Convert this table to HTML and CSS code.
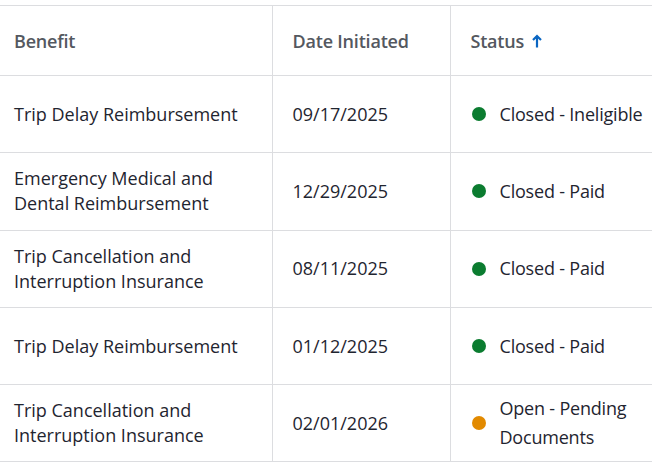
FILE: index.html
```html
<!DOCTYPE html>
<html lang="en">
<head>
<meta charset="utf-8">
<title>Claims</title>
<link rel="stylesheet" href="styles.css">
</head>
<body>
<div class="wrap">
<table class="claims">
  <thead>
    <tr>
      <th class="c1">Benefit</th>
      <th class="c2">Date Initiated</th>
      <th class="c3"><span class="sort">Status <svg class="arrow" width="10" height="14" viewBox="0 0 10 14"><path d="M5 13.5V2.5M1 6L5 2L9 6" fill="none" stroke="currentColor" stroke-width="2.2"/></svg></span></th>
    </tr>
  </thead>
  <tbody>
    <tr>
      <td class="c1">Trip Delay Reimbursement</td>
      <td class="c2">09/17/2025</td>
      <td class="c3"><div class="status"><span class="dot green"></span><span class="label">Closed - Ineligible</span></div></td>
    </tr>
    <tr>
      <td class="c1">Emergency Medical and<br>Dental Reimbursement</td>
      <td class="c2">12/29/2025</td>
      <td class="c3"><div class="status"><span class="dot green"></span><span class="label">Closed - Paid</span></div></td>
    </tr>
    <tr>
      <td class="c1">Trip Cancellation and<br>Interruption Insurance</td>
      <td class="c2">08/11/2025</td>
      <td class="c3"><div class="status"><span class="dot green"></span><span class="label">Closed - Paid</span></div></td>
    </tr>
    <tr>
      <td class="c1">Trip Delay Reimbursement</td>
      <td class="c2">01/12/2025</td>
      <td class="c3"><div class="status"><span class="dot green"></span><span class="label">Closed - Paid</span></div></td>
    </tr>
    <tr>
      <td class="c1">Trip Cancellation and<br>Interruption Insurance</td>
      <td class="c2">02/01/2026</td>
      <td class="c3"><div class="status"><span class="dot orange"></span><span class="label">Open - Pending<br>Documents</span></div></td>
    </tr>
  </tbody>
</table>
</div>
</body>
</html>
```
FILE: styles.css
```css
html, body {
  margin: 0;
  padding: 0;
  background: #ffffff;
  overflow: hidden;
}
body {
  font-family: "Open Sans", "Noto Sans", sans-serif;
  font-size: 18px;
  color: #1f2530;
}
.wrap {
  padding-top: 5px;
  margin-left: -6px;
  width: 700px;
}
.claims {
  border-collapse: collapse;
  table-layout: fixed;
  width: 700px;
}
.claims th, .claims td {
  box-sizing: border-box;
  border-top: 1px solid #dcdde0;
  border-bottom: 1px solid #dcdde0;
  text-align: left;
  vertical-align: middle;
  padding: 0 20px;
}
.c1 { width: 278px; }
.claims th.c2, .claims td.c2 {
  width: 178px;
  border-left: 1px solid #dcdde0;
  border-right: 1px solid #dcdde0;
}
.claims th {
  height: 70px;
  font-weight: 600;
  color: #545860;
  letter-spacing: -0.2px;
}
.claims td {
  height: 77.3px;
  line-height: 25px;
}
.sort {
  display: inline-flex;
  align-items: center;
  gap: 8px;
}
.arrow {
  color: #0a66c2;
  display: block;
}
.status {
  display: flex;
  align-items: center;
  gap: 14px;
  padding-left: 1px;
}
.label {
  line-height: 29px;
  letter-spacing: -0.2px;
}
.dot {
  width: 14px;
  height: 14px;
  border-radius: 50%;
  flex: none;
}
.green { background: #0b7c30; }
.orange { background: #e28a00; }
```
